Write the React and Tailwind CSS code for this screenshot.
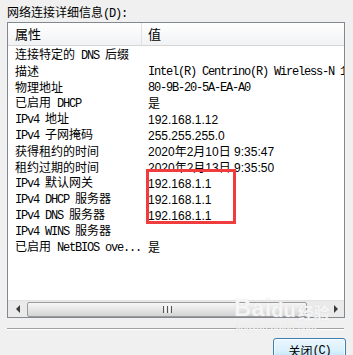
import React from "react";

const rows = [
  { label: "连接特定的 DNS 后缀", value: "" },
  { label: "描述", value: "Intel(R) Centrino(R) Wireless-N 1000", mono: true },
  { label: "物理地址", value: "80-9B-20-5A-EA-A0", mono: true },
  { label: "已启用 DHCP", value: "是" },
  { label: "IPv4 地址", value: "192.168.1.12" },
  { label: "IPv4 子网掩码", value: "255.255.255.0" },
  { label: "获得租约的时间", value: "2020年2月10日 9:35:47" },
  { label: "租约过期的时间", value: "2020年2月13日 9:35:50" },
  { label: "IPv4 默认网关", value: "192.168.1.1" },
  { label: "IPv4 DHCP 服务器", value: "192.168.1.1" },
  { label: "IPv4 DNS 服务器", value: "192.168.1.1" },
  { label: "IPv4 WINS 服务器", value: "" },
  { label: "已启用 NetBIOS ove...", value: "是" },
];

// ascii runs in a narrow mono, cjk in the sans
function Mixed({ text }) {
  const parts = text.split(/([\x20-\x7e]+)/).filter(Boolean);
  return parts.map((p, i) =>
    /^[\x20-\x7e]+$/.test(p) ? (
      <span key={i} className="font-['Liberation_Mono',monospace] text-[12px] tracking-[-1.2px] whitespace-pre">{p}</span>
    ) : (
      <span key={i}>{p}</span>
    )
  );
}

export default function App() {
  return (
    <div className="relative w-[353px] h-[355px] overflow-hidden bg-[#f0f0f0] text-black font-['Noto_Sans_CJK_SC',sans-serif] text-[12px]">
      <div className="h-[22px] pl-[7px] pt-[4px] leading-[16px] whitespace-nowrap">
        <Mixed text="网络连接详细信息(D):" />
      </div>

      <div className="ml-[7px] w-[338px] h-[296px] border border-[#828790] bg-white flex flex-col overflow-hidden">
        <div className="h-[23px] flex border-b border-[#d5d5d5] bg-gradient-to-b from-white to-[#f1f2f4] shrink-0">
          <div className="w-[134px] border-r border-[#dfe2e6] pl-[7px] flex items-center text-[13px]">属性</div>
          <div className="pl-[6px] flex items-center text-[13px]">值</div>
        </div>

        <div className="flex-1 pt-[1px]">
          {rows.map((r) => (
            <div key={r.label} className="h-[16px] flex items-center whitespace-nowrap leading-[16px]">
              <div className="w-[135px] pl-[7px] shrink-0">
                <Mixed text={r.label} />
              </div>
              <div className="pl-[5px]">
                {r.mono ? (
                  <Mixed text={r.value} />
                ) : /[0-9]/.test(r.value) ? (
                  <span className="font-['Liberation_Sans','Noto_Sans_CJK_SC',sans-serif] text-[12px]">{r.value}</span>
                ) : (
                  r.value
                )}
              </div>
            </div>
          ))}
        </div>

        <div className="h-[17px] shrink-0 flex items-center bg-[#eaeaea] border-t border-[#e2e2e2]">
          <div className="w-[19px] h-full flex items-center justify-center">
            <div className="w-0 h-0 border-y-[4px] border-y-transparent border-r-[4px] border-r-[#3a3a3a]" />
          </div>
          <div className="w-[280px] h-[15px] rounded-[2px] border border-[#9a9a9a] bg-gradient-to-b from-[#f6f6f6] via-[#e6e6e6] to-[#d3d3d3] flex items-center justify-center gap-[1px]">
            <div className="w-[1px] h-[7px] bg-[#555]" />
            <div className="w-[1px] h-[7px] bg-[#f8f8f8]" />
            <div className="w-[1px] h-[7px] bg-[#555]" />
            <div className="w-[1px] h-[7px] bg-[#f8f8f8]" />
            <div className="w-[1px] h-[7px] bg-[#555]" />
          </div>
          <div className="flex-1 h-full flex items-center justify-end pr-[6px]">
            <div className="w-0 h-0 border-y-[4px] border-y-transparent border-l-[4px] border-l-[#3a3a3a]" />
          </div>
        </div>
      </div>

      <div className="ml-[7px] mt-[10px] w-[337px] h-[2px] border-t border-[#a0a0a0] border-b border-b-white" />

      <div className="flex justify-end pr-[7px] mt-[8px]">
        <button className="w-[73px] h-[26px] rounded-[3px] border border-[#3c7fb1] bg-gradient-to-b from-[#eaf6fd] via-[#d9f0fc] to-[#a7d9f5] shadow-[inset_0_0_0_1px_#ffffffaa] flex items-center justify-center text-[12px]">
          <Mixed text="关闭(C)" />
        </button>
      </div>

      {/* red highlight box */}
      <div className="absolute left-[146px] top-[169px] w-[90px] h-[55px] border-[3px] border-[#f03c3c]" />

      {/* watermark */}
      <div className="absolute left-[234px] top-[296px] text-white/80 [text-shadow:0_0_1px_#cfcfcf] pointer-events-none leading-none">
        <div className="flex items-end font-['Liberation_Sans',sans-serif] font-bold text-[24px]">
          <span>Bai</span>
          <span className="text-[20px]">du</span>
          <span className="font-['Noto_Sans_CJK_SC',sans-serif] text-[16px] ml-[2px]">经验</span>
        </div>
        <div className="font-['Liberation_Sans',sans-serif] text-[10px] mt-[2px] ml-[2px]">jingyan.baidu.com</div>
      </div>
    </div>
  );
}
